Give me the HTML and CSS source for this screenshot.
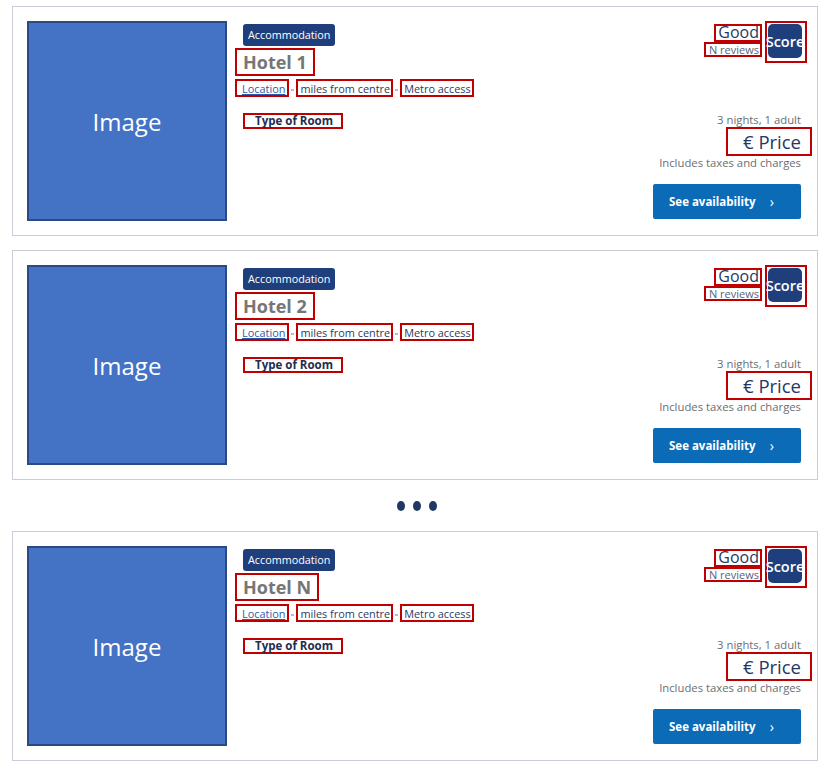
FILE: index.html
```html
<!DOCTYPE html>
<html lang="en">
<head>
<meta charset="utf-8">
<title>Hotel results</title>
<link rel="stylesheet" href="styles.css">
</head>
<body>
<div class="list">
  <div class="card">
    <div class="photo">Image</div>
    <div class="info">
      <span class="badge">Accommodation</span>
      <span class="name box">Hotel 1</span>
      <div class="loc-row">
        <a class="loc box" href="#">Location</a><span class="sep"></span>
        <span class="meta box">miles from centre</span><span class="sep"></span>
        <span class="meta box">Metro access</span>
      </div>
      <span class="room box">Type of Room</span>
    </div>
    <div class="side">
      <div class="rating">
        <div class="rtext">
          <span class="good box">Good</span>
          <span class="reviews box">N reviews</span>
        </div>
        <div class="score-wrap box"><div class="score">Score</div></div>
      </div>
      <div class="pricing">
        <span class="nights">3 nights, 1 adult</span>
        <span class="price box">€ Price</span>
        <span class="taxes">Includes taxes and charges</span>
        <a class="btn" href="#">See availability <span class="chev">›</span></a>
      </div>
    </div>
  </div>

  <div class="card">
    <div class="photo">Image</div>
    <div class="info">
      <span class="badge">Accommodation</span>
      <span class="name box">Hotel 2</span>
      <div class="loc-row">
        <a class="loc box" href="#">Location</a><span class="sep"></span>
        <span class="meta box">miles from centre</span><span class="sep"></span>
        <span class="meta box">Metro access</span>
      </div>
      <span class="room box">Type of Room</span>
    </div>
    <div class="side">
      <div class="rating">
        <div class="rtext">
          <span class="good box">Good</span>
          <span class="reviews box">N reviews</span>
        </div>
        <div class="score-wrap box"><div class="score">Score</div></div>
      </div>
      <div class="pricing">
        <span class="nights">3 nights, 1 adult</span>
        <span class="price box">€ Price</span>
        <span class="taxes">Includes taxes and charges</span>
        <a class="btn" href="#">See availability <span class="chev">›</span></a>
      </div>
    </div>
  </div>

  <div class="dots"><span></span><span></span><span></span></div>

  <div class="card">
    <div class="photo">Image</div>
    <div class="info">
      <span class="badge">Accommodation</span>
      <span class="name box">Hotel N</span>
      <div class="loc-row">
        <a class="loc box" href="#">Location</a><span class="sep"></span>
        <span class="meta box">miles from centre</span><span class="sep"></span>
        <span class="meta box">Metro access</span>
      </div>
      <span class="room box">Type of Room</span>
    </div>
    <div class="side">
      <div class="rating">
        <div class="rtext">
          <span class="good box">Good</span>
          <span class="reviews box">N reviews</span>
        </div>
        <div class="score-wrap box"><div class="score">Score</div></div>
      </div>
      <div class="pricing">
        <span class="nights">3 nights, 1 adult</span>
        <span class="price box">€ Price</span>
        <span class="taxes">Includes taxes and charges</span>
        <a class="btn" href="#">See availability <span class="chev">›</span></a>
      </div>
    </div>
  </div>
</div>
</body>
</html>
```
FILE: styles.css
```css
* { box-sizing: border-box; }

body {
  margin: 0;
  background: #ffffff;
  font-family: "Open Sans", "Noto Sans", sans-serif;
  color: #1f3864;
}

.list {
  padding: 6px 0 0 12px;
  width: 818px;
  display: flex;
  flex-direction: column;
}

.card {
  display: flex;
  height: 230px;
  border: 1px solid #c9ced6;
  padding: 14px 16px 14px 14px;
  background: #fff;
}
.card + .card { margin-top: 14px; }

.box { border: 2px solid #c00000; }

.photo {
  flex: 0 0 200px;
  height: 200px;
  background: #4472c4;
  border: 2px solid #2a4a85;
  color: #fff;
  font-size: 24px;
  display: flex;
  align-items: center;
  justify-content: center;
}

.info {
  display: flex;
  flex-direction: column;
  align-items: flex-start;
  margin-left: 8px;
  padding-top: 3px;
}

.badge {
  margin-left: 8px;
  height: 22px;
  line-height: 22px;
  padding: 0 5px;
  background: #1f3f7c;
  color: #fff;
  font-size: 10.8px;
  border-radius: 3px;
}

.name {
  margin-top: 2px;
  height: 28px;
  line-height: 24px;
  padding: 0 6px 0 6px;
  font-size: 18px;
  font-weight: 700;
  color: #767676;
}

.loc-row {
  margin-top: 3px;
  display: flex;
  align-items: center;
}

.loc, .meta {
  height: 18px;
  line-height: 15px;
  font-size: 10.9px;
}
.loc {
  padding: 0 2px 0 5px;
  color: #2e5aa8;
  text-decoration: underline;
}
.meta {
  padding: 0 1px 0 2px;
  color: #2b3b63;
}
.sep {
  width: 3px;
  height: 2px;
  margin: 4px 2px 0;
  background: #b8bcc4;
}

.room {
  margin: 16px 0 0 8px;
  height: 16px;
  line-height: 12px;
  padding: 0 8px 0 10px;
  font-size: 11.5px;
  font-weight: 700;
  color: #1f2d4f;
}

.side {
  margin-left: auto;
  display: flex;
  flex-direction: column;
  align-items: flex-end;
  justify-content: space-between;
  height: 200px;
}

.rating {
  display: flex;
  align-items: flex-start;
  margin-right: -6px;
}

.rtext {
  display: flex;
  flex-direction: column;
  align-items: flex-end;
  margin: 3px 3px 0 0;
}

.good {
  height: 18px;
  line-height: 13px;
  padding: 0 1px 0 2px;
  font-size: 16px;
  color: #1f3864;
}

.reviews {
  height: 15px;
  line-height: 11px;
  padding: 0 1px 0 3px;
  font-size: 11px;
  color: #56627e;
}

.score-wrap {
  padding: 1px 3px 3px 1px;
}
.score {
  width: 34px;
  height: 34px;
  border-radius: 5px;
  background: #1f3f7c;
  color: #fff;
  font-size: 14.5px;
  font-weight: 600;
  display: flex;
  align-items: center;
  justify-content: center;
  white-space: nowrap;
}

.pricing {
  display: flex;
  flex-direction: column;
  align-items: flex-end;
  margin-bottom: 2px;
}

.nights, .taxes {
  font-size: 11.3px;
  line-height: 14px;
  color: #6b6e76;
}

.price {
  height: 29px;
  line-height: 25px;
  padding: 0 9px 0 15px;
  margin-right: -11px;
  font-size: 18.5px;
  color: #1f3864;
}

.btn {
  margin-top: 14px;
  width: 148px;
  height: 35px;
  background: #0b6bb7;
  color: #fff;
  border-radius: 2px;
  font-size: 11.5px;
  font-weight: 700;
  text-decoration: none;
  display: flex;
  align-items: center;
  padding-left: 16px;
}
.chev {
  margin-left: 14px;
  font-weight: 400;
  font-size: 14px;
}

.dots {
  height: 51px;
  display: flex;
  align-items: center;
  justify-content: center;
  gap: 8px;
  padding-left: 3px;
}
.dots span {
  width: 8px;
  height: 10px;
  border-radius: 50%;
  background: #1f3864;
}
```
